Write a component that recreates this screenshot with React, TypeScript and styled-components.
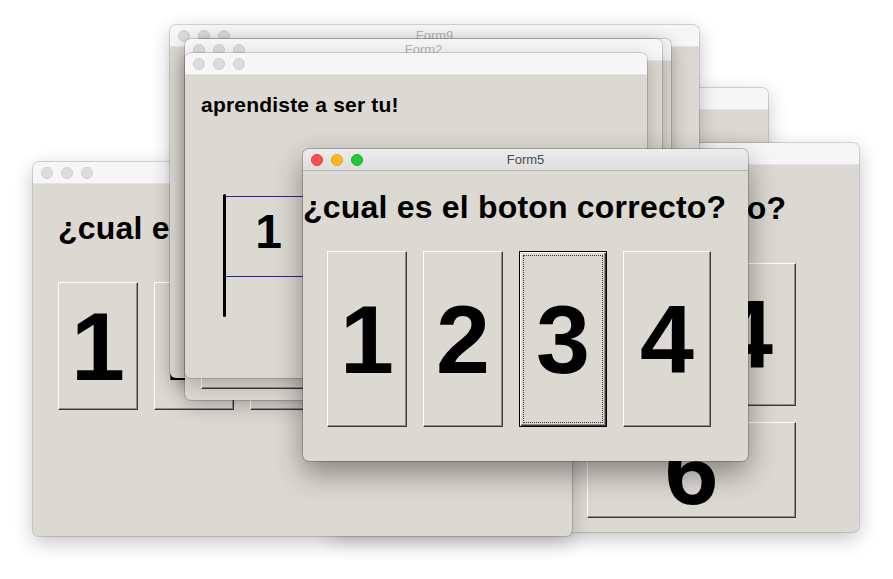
import React from "react";
import styled, { createGlobalStyle, css } from "styled-components";

const GlobalStyle = createGlobalStyle`
  html, body {
    margin: 0;
    padding: 0;
    background: #fff;
  }
  body {
    font-family: "Liberation Sans", Arial, sans-serif;
  }
`;

const Desktop = styled.div`
  position: relative;
  width: 893px;
  height: 579px;
  overflow: hidden;
  background: #fff;
`;

const Frame = styled.div<{ $x: number; $y: number; $w: number; $h: number; $active?: boolean }>`
  position: absolute;
  left: ${(p) => p.$x}px;
  top: ${(p) => p.$y}px;
  width: ${(p) => p.$w}px;
  height: ${(p) => p.$h}px;
  display: flex;
  flex-direction: column;
  background: #dcd8d2;
  border-radius: 6px;
  overflow: hidden;
  box-shadow: ${(p) =>
    p.$active
      ? "0 0 0 1px rgba(0,0,0,0.2), 0 12px 30px rgba(0,0,0,0.4)"
      : "0 0 0 1px rgba(0,0,0,0.14), 0 6px 20px rgba(0,0,0,0.24)"};
`;

const TitleBar = styled.div<{ $active?: boolean }>`
  flex: 0 0 21px;
  display: grid;
  grid-template-columns: 1fr auto 1fr;
  align-items: center;
  padding: 0 8px;
  background: ${(p) => (p.$active ? "linear-gradient(#ececec, #dedede)" : "#f6f6f6")};
  border-bottom: 1px solid ${(p) => (p.$active ? "#b2b2b2" : "#e4e4e4")};
`;

const Lights = styled.div`
  display: flex;
  gap: 8px;
`;

const Light = styled.span<{ $color?: string; $edge?: string }>`
  width: 12px;
  height: 12px;
  box-sizing: border-box;
  border-radius: 50%;
  background: ${(p) => p.$color ?? "#dcdcdc"};
  border: 0.5px solid ${(p) => p.$edge ?? "#cfcfcf"};
`;

const Title = styled.span<{ $active?: boolean }>`
  font-size: 13px;
  line-height: 13px;
  color: ${(p) => (p.$active ? "#4d4d4d" : "#b6b6b6")};
`;

const Body = styled.div<{ $top?: number; $left?: number; $bottom?: number; $end?: boolean }>`
  flex: 1;
  display: flex;
  flex-direction: column;
  justify-content: ${(p) => (p.$end ? "flex-end" : "flex-start")};
  padding: ${(p) => p.$top ?? 0}px 0 ${(p) => p.$bottom ?? 0}px ${(p) => p.$left ?? 0}px;
`;

const Question = styled.h1`
  margin: 0;
  font: bold 32px/32px "Liberation Sans", Arial, sans-serif;
  letter-spacing: 0.2px;
  color: #000;
  white-space: nowrap;
`;

const Message = styled.p`
  margin: 0;
  font: bold 21px/21px "Liberation Sans", Arial, sans-serif;
  letter-spacing: 0.2px;
  color: #000;
  white-space: nowrap;
`;

const Row = styled.div<{ $gap: number; $top: number; $indent?: number }>`
  display: flex;
  gap: ${(p) => p.$gap}px;
  margin-top: ${(p) => p.$top}px;
  padding-left: ${(p) => p.$indent ?? 0}px;
`;

const Key = styled.div<{ $w: number; $h: number; $focus?: boolean }>`
  position: relative;
  flex: 0 0 auto;
  box-sizing: border-box;
  width: ${(p) => p.$w}px;
  height: ${(p) => p.$h}px;
  display: flex;
  align-items: center;
  justify-content: center;
  background: #dcd8d2;
  color: #000;
  font: bold 97px/1 "Liberation Sans", Arial, sans-serif;
  border-top: 1px solid #fff;
  border-left: 1px solid #fff;
  border-right: 1px solid #3a3a3a;
  border-bottom: 1px solid #3a3a3a;
  box-shadow: inset -1px -1px 0 #8e8e8e;
  ${(p) =>
    p.$focus &&
    css`
      border: 1px solid #000;
      box-shadow: inset 1px 1px 0 #fff, inset -1px -1px 0 #3a3a3a, inset -2px -2px 0 #8e8e8e;
      &::after {
        content: "";
        position: absolute;
        inset: 3px;
        border: 1px dotted #333;
      }
    `}
`;

const Flag = styled.div`
  display: flex;
  align-items: flex-start;
  margin: 79px 0 0 22px;
`;

const Pole = styled.div`
  width: 3px;
  height: 123px;
  border-radius: 2px;
  background: #000;
`;

const Banner = styled.div`
  box-sizing: border-box;
  width: 86px;
  height: 81px;
  margin-top: 2px;
  padding-bottom: 9px;
  display: flex;
  align-items: center;
  justify-content: center;
  border: 1px solid #2424b4;
  border-left: none;
  font: bold 48px/1 "Liberation Sans", Arial, sans-serif;
  color: #000;
`;

type WindowProps = {
  x: number;
  y: number;
  w: number;
  h: number;
  title?: string;
  active?: boolean;
  children?: React.ReactNode;
};

function Window({ x, y, w, h, title, active, children }: WindowProps) {
  return (
    <Frame $x={x} $y={y} $w={w} $h={h} $active={active}>
      <TitleBar $active={active}>
        <Lights>
          {active ? (
            <>
              <Light $color="#fd4f4b" $edge="#e0403b" />
              <Light $color="#fdb823" $edge="#dea11b" />
              <Light $color="#1fc93a" $edge="#17ad2c" />
            </>
          ) : (
            <>
              <Light />
              <Light />
              <Light />
            </>
          )}
        </Lights>
        <Title $active={active}>{title}</Title>
        <span />
      </TitleBar>
      {children}
    </Frame>
  );
}

const QUESTION = "¿cual es el boton correcto?";

export default function App() {
  return (
    <Desktop>
      <GlobalStyle />

      <Window x={470} y={88} w={298} h={200} />

      <Window x={330} y={143} w={529} h={389}>
        <Body $top={27} $left={33}>
          <Question>{QUESTION}</Question>
          <Row $gap={10} $top={39} $indent={3}>
            {[1, 2, 3, 4].map((n) => (
              <Key key={n} $w={100} $h={143}>{n}</Key>
            ))}
          </Row>
          <Row $gap={21} $top={16} $indent={3}>
            <Key $w={200} $h={96}>5</Key>
            <Key $w={209} $h={96}>6</Key>
          </Row>
        </Body>
      </Window>

      <Window x={33} y={162} w={539} h={374}>
        <Body $top={28} $left={25}>
          <Question>{QUESTION}</Question>
          <Row $gap={16} $top={38}>
            {[1, 2, 3, 4, 5].map((n) => (
              <Key key={n} $w={80} $h={128}>{n}</Key>
            ))}
          </Row>
        </Body>
      </Window>

      <Window x={170} y={25} w={529} h={353} title="Form9" />

      <Window x={194} y={39} w={477} h={340} />

      <Window x={185} y={39} w={477} h={361} title="Form2">
        <Body $left={16} $bottom={11} $end>
          <Key $w={240} $h={60} />
        </Body>
      </Window>

      <Window x={185} y={53} w={462} h={325}>
        <Body $top={19} $left={16}>
          <Message>aprendiste a ser tu!</Message>
          <Flag>
            <Pole />
            <Banner>1</Banner>
          </Flag>
        </Body>
      </Window>

      <Window x={303} y={149} w={445} h={312} title="Form5" active>
        <Body $top={20}>
          <Question>{QUESTION}</Question>
          <Row $gap={16} $top={28} $indent={24}>
            <Key $w={80} $h={176}>1</Key>
            <Key $w={80} $h={176}>2</Key>
            <Key $w={88} $h={176} $focus>3</Key>
            <Key $w={88} $h={176}>4</Key>
          </Row>
        </Body>
      </Window>
    </Desktop>
  );
}
